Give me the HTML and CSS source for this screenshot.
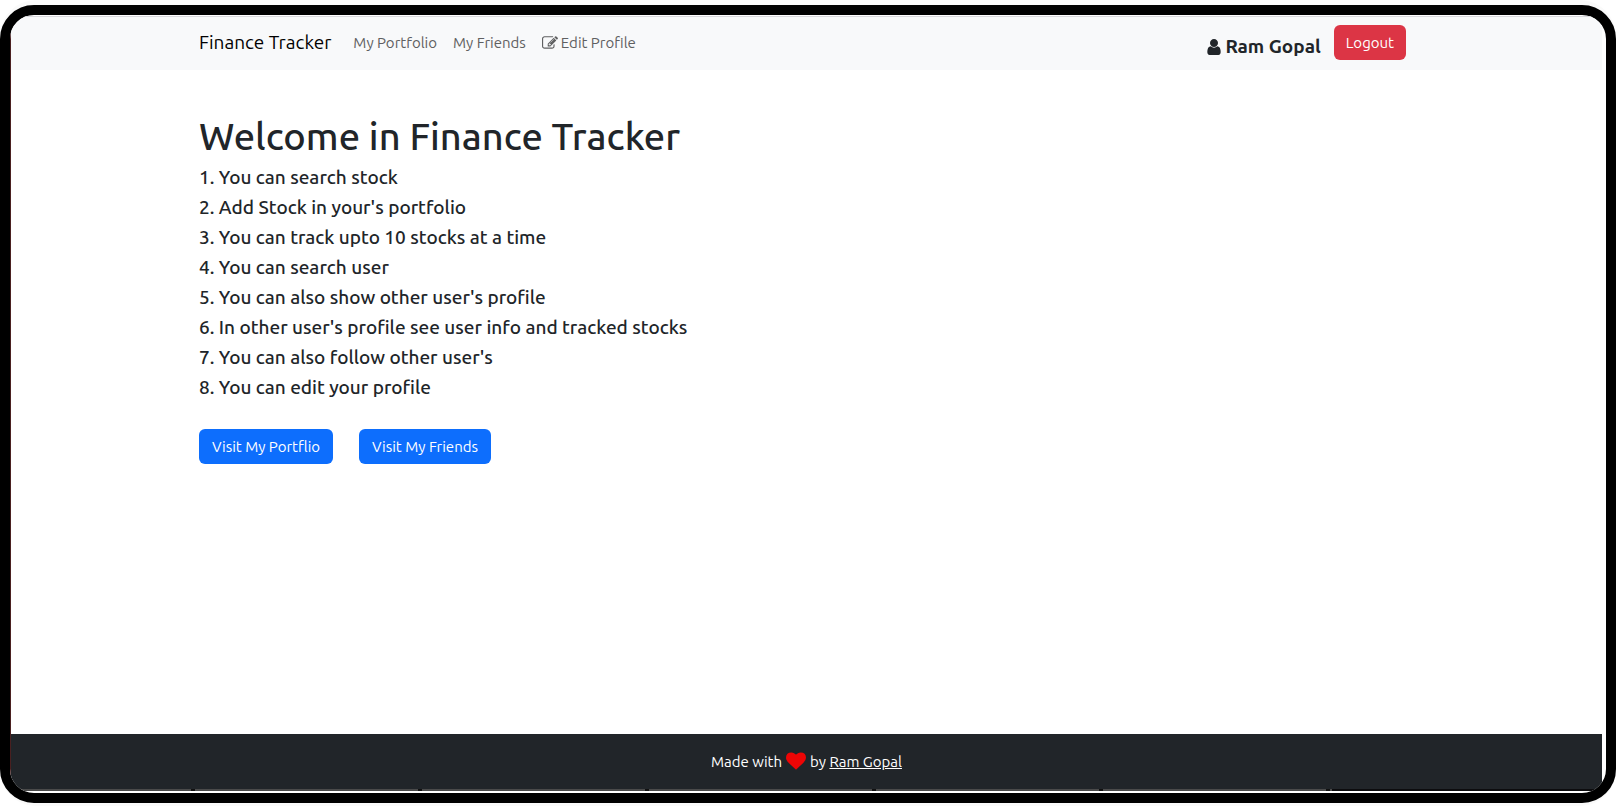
FILE: index.html
```html
<!DOCTYPE html>
<html lang="en">
<head>
<meta charset="utf-8">
<title>Finance Tracker</title>
<link rel="stylesheet" href="styles.css">
</head>
<body>
<div class="backdrop">
<div class="frame">
<div class="page">
  <header class="navbar">
    <div class="container nav-row">
      <a class="brand" href="#">Finance Tracker</a>
      <nav class="nav-links">
        <a href="#">My Portfolio</a>
        <a href="#">My Friends</a>
        <a href="#"><svg class="icon-edit" viewBox="0 0 1792 1792" aria-hidden="true"><path d="M888 1184l116-116-152-152-116 116v56h96v96h56zm440-720q-16-16-33 1l-350 350q-17 17-1 33t33-1l350-350q17-17 1-33zm80 594v190q0 119-84.500 203.500t-203.500 84.500h-832q-119 0-203.500-84.500t-84.500-203.500v-832q0-119 84.500-203.500t203.500-84.500h832q63 0 117 25 15 7 18 23 3 17-9 29l-49 49q-14 14-32 8-23-6-45-6h-832q-66 0-113 47t-47 113v832q0 66 47 113t113 47h832q66 0 113-47t47-113v-126q0-13 9-22l64-64q15-15 35-7t20 29zm-96-738l288 288-672 672h-288v-288zm444 132l-92 92-288-288 92-92q28-28 68-28t68 28l152 152q28 28 28 68t-28 68z"/></svg>Edit Profile</a>
      </nav>
      <div class="account">
        <span class="user"><svg class="icon-user" viewBox="256 128 1280 1536" aria-hidden="true"><path d="M1536 1399q0 109-62.500 187t-150.500 78h-854q-88 0-150.500-78t-62.500-187q0-85 8.500-160.500t31.500-152 58.500-131 94-89 134.500-34.500q131 128 313 128t313-128q76 0 134.500 34.500t94 89 58.500 131 31.500 152 8.500 160.500zm-256-887q0 159-112.500 271.500t-271.500 112.500-271.500-112.500-112.500-271.500 112.500-271.500 271.500-112.500 271.500 112.500 112.500 271.500z"/></svg>Ram Gopal</span>
        <button class="btn btn-danger" type="button">Logout</button>
      </div>
    </div>
  </header>
  <main class="main">
    <div class="container">
      <h1>Welcome in Finance Tracker</h1>
      <ol class="steps">
        <li>You can search stock</li>
        <li>Add Stock in your's portfolio</li>
        <li>You can track upto 10 stocks at a time</li>
        <li>You can search user</li>
        <li>You can also show other user's profile</li>
        <li>In other user's profile see user info and tracked stocks</li>
        <li>You can also follow other user's</li>
        <li>You can edit your profile</li>
      </ol>
      <div class="actions">
        <a class="btn btn-primary" href="#">Visit My Portflio</a>
        <a class="btn btn-primary" href="#">Visit My Friends</a>
      </div>
    </div>
  </main>
  <footer class="footer">
    <span>Made with</span>
    <svg class="icon-heart" viewBox="0 128 1792 1536" aria-hidden="true"><path d="M896 1664q-26 0-44-18l-624-602q-10-8-27.500-26t-55.500-65.500-68-97.500-53.500-121-23.500-138q0-220 127-344t351-124q62 0 126.500 21.500t120 58 95.500 68.500 76 68q36-36 76-68t95.500-68.500 120-58 126.500-21.500q224 0 351 124t127 344q0 221-229 450l-623 600q-18 18-44 18z"/></svg>
    <span>by <a href="#">Ram Gopal</a></span>
  </footer>
  <div class="edge"></div>
</div>
</div>
</div>
</body>
</html>
```
FILE: styles.css
```css
* { box-sizing: border-box; }
html { background: #fff; }
body {
  margin: 0;
  font-family: Ubuntu, "Noto Sans", sans-serif;
  font-size: 15px;
  line-height: 23px;
  color: #212529;
}

/* Device frame */
.backdrop {
  display: flex;
  min-height: 100vh;
  padding: 5px 0 3px;
  background: #fafafa;
  border-radius: 36px;
}
.frame {
  flex: 1;
  display: flex;
  border: 10px solid #000;
  border-radius: 34px;
  background: #fff;
  overflow: hidden;
}
.page {
  flex: 1;
  display: flex;
  flex-direction: column;
  margin: 1px 4px 2px 0;
  border-left: 1px solid #4a2020;
}
.container { margin: 0 196px 0 188px; }

/* Navbar */
.navbar {
  border-top: 1px solid #d8d8dc;
  background: #f8f9fa;
  padding: 8px 0 10px;
}
.nav-row { display: flex; align-items: center; }
.brand {
  color: #000;
  font-size: 19px;
  text-decoration: none;
  margin-right: 22px;
}
.nav-links { display: flex; gap: 16px; }
.nav-links a {
  display: flex;
  align-items: center;
  color: #5f6061;
  text-decoration: none;
}
.icon-edit { width: 16px; height: 16px; margin-right: 3px; fill: currentColor; }
.account { margin-left: auto; display: flex; align-items: center; gap: 13px; }
.user {
  display: flex;
  align-items: center;
  padding-top: 8px;
  font-size: 19px;
  font-weight: 700;
}
.icon-user { width: 14px; height: 16px; margin-right: 4px; fill: currentColor; }

/* Buttons */
.btn {
  display: inline-block;
  padding: 5px 11px;
  border: 1px solid transparent;
  border-radius: 6px;
  color: #fff;
  font: inherit;
  text-decoration: none;
}
.btn-danger { background: #dc3545; }
.btn-primary { background: #0d6efd; padding: 5px 12px; }

/* Content */
.main { flex: 1; padding-top: 43px; }
h1 { margin: 0 0 3px; font-size: 38px; line-height: 46px; font-weight: 550; }
.steps {
  margin: 0;
  padding: 0;
  list-style: none;
  counter-reset: step;
  font-size: 19px;
  line-height: 30px;
  font-weight: 550;
}
.steps li { counter-increment: step; }
.steps li::before { content: counter(step) ". "; }
.actions { display: flex; gap: 26px; margin-top: 27px; }

/* Footer */
.footer {
  display: flex;
  justify-content: center;
  align-items: center;
  gap: 4px;
  padding: 16px 0;
  background: #212529;
  color: #fff;
}
.footer a { color: #fff; }
.icon-heart { width: 20px; height: 18px; margin-bottom: 2px; fill: #ee0505; }
.edge {
  height: 2px;
  background:
    linear-gradient(90deg, transparent 83%, #0c0c0e 83%),
    repeating-linear-gradient(90deg, #4a4a4a 0 180px, #111 180px 184px, #4a4a4a 184px 227px);
}
```
